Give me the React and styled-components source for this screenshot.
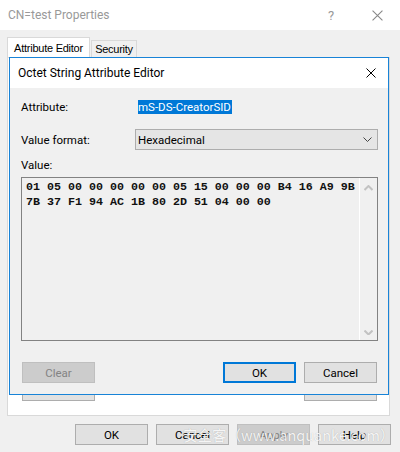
import React from "react"
import styled, {createGlobalStyle} from "styled-components"

/* page defaults */
const Global = createGlobalStyle`
  body {
    margin: 0;
    background: #f0f0f0;
    font-family: Roboto, "Liberation Sans", sans-serif;
    font-size: 11.5px;
    color: #000;
  }
`

const Window = styled.div`
  position: relative;
  width: 400px;
  height: 452px;
  background: #f0f0f0;
  overflow: hidden;
`

const TitleBar = styled.div`
  height: 30px;
  background: #fff;
  display: flex;
  align-items: center;
  padding-left: 8px;
`

const WindowTitle = styled.span`
  flex: 1;
  color: #999;
  font-size: 12px;
`

const CaptionButton = styled.span`
  width: 46px;
  display: flex;
  justify-content: center;
  align-items: center;
  color: #999;
  font-size: 13px;
`

const Tabs = styled.div`
  display: flex;
  align-items: flex-end;
  margin: 7px 0 0 7px;
  height: 20px;
`

const Tab = styled.div`
  height: ${p => (p.active ? 20 : 17)}px;
  width: ${p => p.w}px;
  box-sizing: border-box;
  display: flex;
  align-items: center;
  justify-content: center;
  font-family: "Liberation Sans", Arial, sans-serif;
  font-size: 11px;
  letter-spacing: -0.25px;
  background: ${p => (p.active ? "#fff" : "#f0f0f0")};
  border: 1px solid #d9d9d9;
  border-bottom: none;
  margin-left: ${p => (p.active ? 0 : 1)}px;
`

const Panel = styled.div`
  margin-left: 7px;
  width: 383px;
  height: 359px;
  box-sizing: border-box;
  background: #fff;
  border: 1px solid #d9d9d9;
  display: flex;
  flex-direction: column;
`

const Dialog = styled.div`
  margin: -1px 0 0 1px;
  width: 380px;
  height: 338px;
  box-sizing: border-box;
  border: 1px solid #1883d7;
  display: flex;
  flex-direction: column;
`

const DialogTitle = styled.div`
  height: 30px;
  background: #fff;
  display: flex;
  align-items: center;
  padding-left: 8px;
`

const DialogCaption = styled.span`
  flex: 1;
  font-size: 12px;
`

const CloseBox = styled.span`
  width: 32px;
  display: flex;
  justify-content: center;
  margin-right: 1px;
`

const DialogBody = styled.div`
  flex: 1;
  background: #f0f0f0;
  padding: 10px 10px 11px 11px;
  display: flex;
  flex-direction: column;
`

const Row = styled.div`
  display: flex;
  align-items: center;
  height: ${p => p.h}px;
  margin-top: ${p => p.mt || 0}px;
`

const Label = styled.span`
  width: ${p => p.w || 0}px;
  flex-shrink: 0;
`

const Selected = styled.span`
  background: #0078d7;
  color: #fff;
  height: 14px;
  line-height: 14px;
  padding: 0 1px 0 0;
`

const Select = styled.div`
  flex: 1;
  height: 21px;
  box-sizing: border-box;
  border: 1px solid #adadad;
  background: #e5e5e5;
  display: flex;
  align-items: center;
  padding: 0 5px 0 2px;
`

const SelectText = styled.span`
  flex: 1;
`

const ValueLabel = styled.div`
  height: 16px;
  line-height: 16px;
  margin-top: 7px;
`

const TextBox = styled.div`
  margin-top: 4px;
  height: 164px;
  box-sizing: border-box;
  border: 1px solid #828282;
  background: #f0f0f0;
  display: flex;
`

const Hex = styled.pre`
  flex: 1;
  margin: 0;
  padding: 2px 0 0 4px;
  font-family: "Liberation Mono", "Courier New", monospace;
  font-size: 11.67px;
  font-weight: bold;
  line-height: 15px;
  color: #111;
`

const ScrollBar = styled.div`
  width: 17px;
  border-left: 1px solid #fff;
  display: flex;
  flex-direction: column;
  justify-content: space-between;
  align-items: center;
  padding: 7px 0 5px;
`

const Buttons = styled.div`
  display: flex;
  justify-content: space-between;
  margin-top: 21px;
  padding: 0 1px;
`

const Group = styled.div`
  display: flex;
  gap: 8px;
`

const Button = styled.div`
  width: 73px;
  height: 21px;
  box-sizing: border-box;
  display: flex;
  align-items: center;
  justify-content: center;
  background: ${p => (p.disabled ? "#cccccc" : "#e1e1e1")};
  color: ${p => (p.disabled ? "#838383" : "#000")};
  border: ${p => (p.primary ? "2px solid #0078d7" : p.disabled ? "1px solid #bfbfbf" : "1px solid #adadad")};
`

const Behind = styled.div`
  display: flex;
  justify-content: space-between;
  padding: 0 12px 0 14px;
`

const Stub = styled.div`
  width: 73px;
  height: 6px;
  box-sizing: border-box;
  background: #e1e1e1;
  border: 1px solid #adadad;
  border-top: none;
`

const Footer = styled.div`
  position: relative;
  display: flex;
  justify-content: flex-end;
  gap: 8px;
  margin-top: 8px;
  padding-right: 9px;
`

const Watermark = styled.span`
  position: absolute;
  left: 183px;
  top: 0;
  height: 21px;
  line-height: 21px;
  font-family: "Noto Sans CJK SC", "Noto Sans", sans-serif;
  font-size: 14.5px;
  color: rgba(255, 255, 255, 0.88);
  text-shadow: 0 0 1px rgba(0, 0, 0, 0.25);
  white-space: nowrap;
`

const Cross = ({size = 10, color = "#000"}) => (
  <svg width={size} height={size} viewBox="0 0 10 10">
    <path d="M0.5 0.5 L9.5 9.5 M9.5 0.5 L0.5 9.5" stroke={color} strokeWidth="1" fill="none" />
  </svg>
)

const Chevron = ({up, color, w = 8, sw = 1}) => (
  <svg width={w} height={w / 2 + 1} viewBox={`0 0 ${w} ${w / 2 + 1}`}>
    <polyline
      points={up ? `0.5,${w / 2 + 0.5} ${w / 2},1 ${w - 0.5},${w / 2 + 0.5}` : `0.5,0.5 ${w / 2},${w / 2} ${w - 0.5},0.5`}
      stroke={color}
      strokeWidth={sw}
      fill="none"
    />
  </svg>
)

const hex = "01 05 00 00 00 00 00 05 15 00 00 00 B4 16 A9 9B\n7B 37 F1 94 AC 1B 80 2D 51 04 00 00"

const App = () => {
  return (
    <Window>
      <Global />
      <TitleBar>
        <WindowTitle>CN=test Properties</WindowTitle>
        <CaptionButton>?</CaptionButton>
        <CaptionButton><Cross size={11} color="#888" /></CaptionButton>
      </TitleBar>
      <Tabs>
        <Tab active w={83}>Attribute Editor</Tab>
        <Tab w={46}>Security</Tab>
      </Tabs>
      <Panel>
        <Dialog>
          <DialogTitle>
            <DialogCaption>Octet String Attribute Editor</DialogCaption>
            <CloseBox><Cross /></CloseBox>
          </DialogTitle>
          <DialogBody>
            <Row h={18}>
              <Label w={117}>Attribute:</Label>
              <Selected>mS-DS-CreatorSID</Selected>
            </Row>
            <Row h={21} mt={13}>
              <Label w={114}>Value format:</Label>
              <Select>
                <SelectText>Hexadecimal</SelectText>
                <Chevron color="#444" w={9} />
              </Select>
            </Row>
            <ValueLabel>Value:</ValueLabel>
            <TextBox>
              <Hex>{hex}</Hex>
              <ScrollBar>
                <Chevron up color="#c2c2c2" w={9} sw={2} />
                <Chevron color="#c2c2c2" w={9} sw={2} />
              </ScrollBar>
            </TextBox>
            <Buttons>
              <Button disabled>Clear</Button>
              <Group>
                <Button primary>OK</Button>
                <Button>Cancel</Button>
              </Group>
            </Buttons>
          </DialogBody>
        </Dialog>
        <Behind>
          <Stub />
          <Stub />
        </Behind>
      </Panel>
      <Footer>
        <Button>OK</Button>
        <Button>Cancel</Button>
        <Button disabled>Apply</Button>
        <Button>Help</Button>
        <Watermark>安全客（www.anquanke.com）</Watermark>
      </Footer>
    </Window>
  )
}

export default App
